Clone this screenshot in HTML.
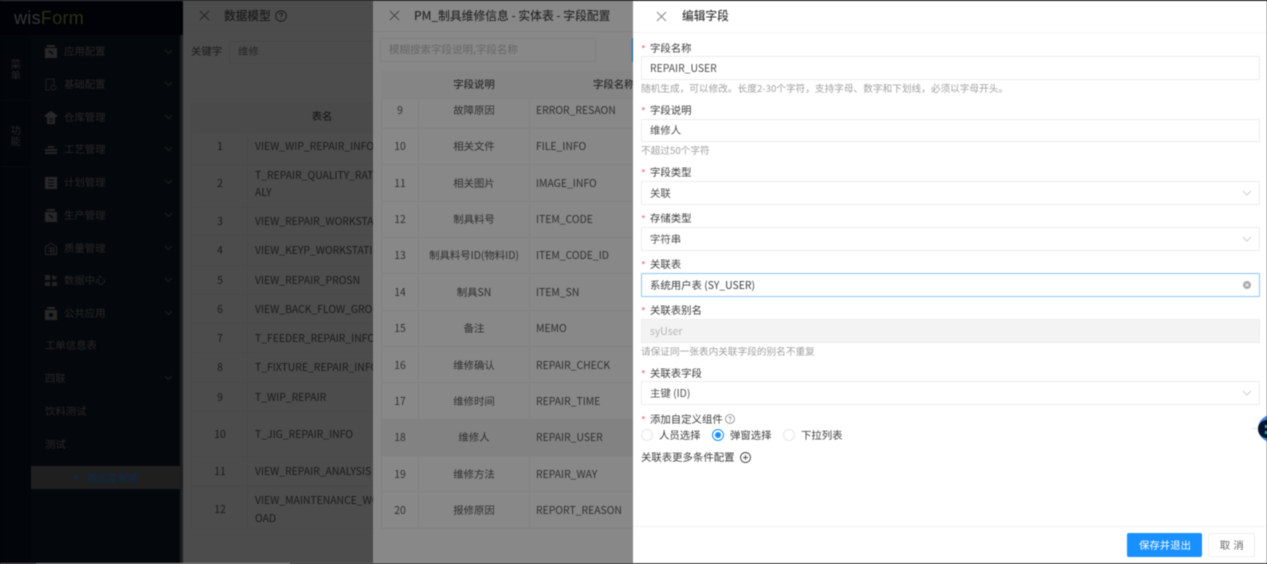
<!DOCTYPE html>
<html lang="zh"><head><meta charset="utf-8"><title>编辑字段</title>
<style>
html,body{margin:0;padding:0;width:1267px;height:564px;overflow:hidden;background:#000}
#r{position:absolute;left:0;top:0;width:1267px;height:564px;overflow:hidden;font-family:"Noto Sans CJK SC","Liberation Sans",sans-serif;font-size:10.4px;filter:blur(.45px)}
#r div,#r svg{position:absolute}
.t{white-space:nowrap;line-height:14px;height:14px;transform:translateY(-7px)}
.c{transform:translate(-50%,-7px)}
.m{left:64px;color:#262626;font-size:10.4px}
.g{left:164px;width:9px;height:9px}
.p1{color:#1a1a1a}
.p2{color:#303030}
.l{background:#494949}
.k{background:#828282}
.lb{left:650px;color:#3e3e3e;font-size:10.4px}
.st{left:641px;color:#f5656b;font-size:10px}
.hn{left:641px;color:#a0a0a0;font-size:9.67px}
.in{left:641px;width:617px;box-sizing:content-box;border:1px solid #ececec;border-radius:1px;background:#fff}
.v{left:650px;color:#4e4e4e;font-size:10.4px}
.ar{left:1242px;width:10px;height:10px}
</style></head><body>
<div id="r">
<!-- sidebar -->
<div style="left:0;top:0;width:31px;height:564px;background:#02050a"></div>
<div style="left:31px;top:0;width:150px;height:564px;background:#04080c"></div>
<div style="left:0;top:0;width:183px;height:35px;background:#000208"></div>
<div style="left:0;top:100px;width:31px;height:1px;background:#070a0e"></div>
<div style="left:0;top:166px;width:31px;height:1px;background:#070a0e"></div>
<div style="left:180px;top:35px;width:3px;height:529px;background:#1d1e1f"></div>
<div class="t" style="left:14px;top:18px;font-size:18px;line-height:20px;height:20px;transform:translateY(-10px);font-family:'Liberation Sans',sans-serif;letter-spacing:.3px"><span style="color:#363636">wis</span><span style="color:#2b3010">Form</span></div>
<div class="t c" style="left:16px;top:63px;color:#262626;line-height:11px;height:22px;width:11px;transform:translate(-50%,-5px);white-space:normal">菜单</div>
<div class="t c" style="left:16px;top:129px;color:#262626;line-height:11px;height:22px;width:11px;transform:translate(-50%,-5px);white-space:normal">功能</div>

<div class="t m" style="top:51px">应用配置</div>
<div class="t m" style="top:84px">基础配置</div>
<div class="t m" style="top:117px">仓库管理</div>
<div class="t m" style="top:149px">工艺管理</div>
<div class="t m" style="top:182px">计划管理</div>
<div class="t m" style="top:215px">生产管理</div>
<div class="t m" style="top:248px">质量管理</div>
<div class="t m" style="top:280px">数据中心</div>
<div class="t m" style="top:313px">公共应用</div>
<div class="t m" style="top:345px;left:45px">工单信息表</div>
<div class="t m" style="top:378px;left:45px">四联</div>
<div class="t m" style="top:411px;left:45px">饮料测试</div>
<div class="t m" style="top:444px;left:45px">测试</div>

<svg style="left:45px;top:45px" width="12" height="13" viewBox="0 0 12 13"><path d="M2 0h8v2H2zM0 3h12v10H0z" fill="#272727"/><path d="M4 6l4 3" stroke="#04080c" stroke-width="1.500"/></svg>
<svg style="left:45px;top:78px" width="12" height="13" viewBox="0 0 12 13" fill="none" stroke="#1f1f1f"><path d="M1 1h8v5M1 1v11h4"/><circle cx="8.500" cy="9.500" r="2.500"/></svg>
<svg style="left:45px;top:111px" width="12" height="13" viewBox="0 0 12 13"><path d="M6 0l6 4v2H0V4zM2 6h8v7H2z" fill="#272727"/><path d="M4 8h4M4 10.500h4" stroke="#04080c"/></svg>
<svg style="left:45px;top:144px" width="12" height="11" viewBox="0 0 12 11"><path d="M3 2h6v2H3zM0 5h12v2H0zM0 8h12v2H0z" fill="#242424"/></svg>
<svg style="left:45px;top:176px" width="12" height="13" viewBox="0 0 12 13"><path d="M0 1h12v12H0z" fill="#272727"/><path d="M3 4h6M3 7h6M3 10h6" stroke="#04080c"/></svg>
<svg style="left:45px;top:209px" width="12" height="13" viewBox="0 0 12 13"><path d="M2 0h8v2H2zM0 3h12v10H0z" fill="#272727"/><path d="M4 6l4 3" stroke="#04080c" stroke-width="1.500"/></svg>
<svg style="left:45px;top:242px" width="12" height="13" viewBox="0 0 12 13" fill="none" stroke="#232323"><path d="M.5 12.500V5L6 1l5.500 4v7.500zM3 6h6v6.500M6 6v6.500M3 9h6"/></svg>
<svg style="left:45px;top:274px" width="12" height="13" viewBox="0 0 12 13"><path d="M0 1h5v5H0zM7 1l5 2-2 3-3-1zM0 8h5v4H0zM7 8h5v4H7z" fill="#222"/></svg>
<svg style="left:45px;top:307px" width="12" height="13" viewBox="0 0 12 13"><path d="M2 0h8v2H2zM0 3h12v10H0z" fill="#272727"/><circle cx="6" cy="8" r="2" fill="#04080c"/></svg>

<svg class="g" style="top:47px" viewBox="0 0 9 9" fill="none" stroke="#1e1e1e"><path d="M1 3l3.500 3.500L8 3"/></svg>
<svg class="g" style="top:79px" viewBox="0 0 9 9" fill="none" stroke="#1e1e1e"><path d="M1 3l3.500 3.500L8 3"/></svg>
<svg class="g" style="top:112px" viewBox="0 0 9 9" fill="none" stroke="#1e1e1e"><path d="M1 3l3.500 3.500L8 3"/></svg>
<svg class="g" style="top:144px" viewBox="0 0 9 9" fill="none" stroke="#1e1e1e"><path d="M1 3l3.500 3.500L8 3"/></svg>
<svg class="g" style="top:177px" viewBox="0 0 9 9" fill="none" stroke="#1e1e1e"><path d="M1 3l3.500 3.500L8 3"/></svg>
<svg class="g" style="top:210px" viewBox="0 0 9 9" fill="none" stroke="#1e1e1e"><path d="M1 3l3.500 3.500L8 3"/></svg>
<svg class="g" style="top:243px" viewBox="0 0 9 9" fill="none" stroke="#1e1e1e"><path d="M1 3l3.500 3.500L8 3"/></svg>
<svg class="g" style="top:275px" viewBox="0 0 9 9" fill="none" stroke="#1e1e1e"><path d="M1 3l3.500 3.500L8 3"/></svg>
<svg class="g" style="top:308px" viewBox="0 0 9 9" fill="none" stroke="#1e1e1e"><path d="M1 3l3.500 3.500L8 3"/></svg>
<svg class="g" style="top:373px" viewBox="0 0 9 9" fill="none" stroke="#1e1e1e"><path d="M1 3l3.500 3.500L8 3"/></svg>

<div style="left:31px;top:466px;width:149px;height:23px;background:#1f1f1f"></div>
<div class="t" style="left:72px;top:477px;color:#0c2a4c"><span style="font-size:13px;margin-right:7px">+</span>添加菜单项</div>

<!-- panel 1 -->
<div style="left:183px;top:0;width:190px;height:564px;background:#4c4c4c"></div>
<svg style="left:199px;top:10px" width="11" height="11" viewBox="0 0 11 11" stroke="#242424" fill="none"><path d="M1 1l9 9M10 1l-9 9"/></svg>
<div class="t p1" style="left:224px;top:16px;font-size:11.700px;font-weight:500">数据模型</div>
<svg style="left:275px;top:10px" width="12" height="12" viewBox="0 0 12 12" fill="none" stroke="#1c1c1c"><circle cx="6" cy="6" r="5.300"/><path d="M4.500 4.500c0-2 3-2 3 0 0 1-1.500 1-1.500 2.500M6 8.500v1"/></svg>
<div class="l" style="left:183px;top:31px;width:190px;height:1px"></div>
<div class="t p1" style="left:191px;top:51px">关键字</div>
<div style="left:229px;top:41px;width:150px;height:21px;border:1px solid #474747;border-radius:2px"></div>
<div class="t" style="left:238px;top:51px;color:#262626">维修</div>
<div style="left:191px;top:102px;width:182px;height:30px;background:#4a4a4a"></div>
<div class="t c p1" style="left:322px;top:116px;font-weight:500">表名</div>
<div class="l" style="left:191px;top:132px;width:182px;height:1px"></div>
<div class="l" style="left:191px;top:164px;width:182px;height:1px"></div>
<div class="l" style="left:191px;top:207px;width:182px;height:1px"></div>
<div class="l" style="left:191px;top:235px;width:182px;height:1px"></div>
<div class="l" style="left:191px;top:265px;width:182px;height:1px"></div>
<div class="l" style="left:191px;top:294px;width:182px;height:1px"></div>
<div class="l" style="left:191px;top:323px;width:182px;height:1px"></div>
<div class="l" style="left:191px;top:352px;width:182px;height:1px"></div>
<div class="l" style="left:191px;top:382px;width:182px;height:1px"></div>
<div class="l" style="left:191px;top:411px;width:182px;height:1px"></div>
<div class="l" style="left:191px;top:456px;width:182px;height:1px"></div>
<div class="l" style="left:191px;top:485px;width:182px;height:1px"></div>
<div class="l" style="left:191px;top:528px;width:182px;height:1px"></div>
<div class="l" style="left:247px;top:132px;width:1px;height:396px"></div>
<div class="l" style="left:191px;top:132px;width:1px;height:396px"></div>
<div class="t c p1" style="left:220px;top:146px">1</div><div class="t p1" style="left:255px;top:146px;width:118px;overflow:hidden">VIEW_WIP_REPAIR_INFO</div>
<div class="t c p1" style="left:220px;top:183px">2</div><div class="t p1" style="left:255px;top:175px;width:118px;overflow:hidden">T_REPAIR_QUALITY_RATE</div><div class="t p1" style="left:255px;top:192px">ALY</div>
<div class="t c p1" style="left:220px;top:221px">3</div><div class="t p1" style="left:255px;top:221px;width:118px;overflow:hidden">VIEW_REPAIR_WORKSTATION</div>
<div class="t c p1" style="left:220px;top:250px">4</div><div class="t p1" style="left:255px;top:250px;width:118px;overflow:hidden">VIEW_KEYP_WORKSTATION</div>
<div class="t c p1" style="left:220px;top:280px">5</div><div class="t p1" style="left:255px;top:280px">VIEW_REPAIR_PROSN</div>
<div class="t c p1" style="left:220px;top:309px">6</div><div class="t p1" style="left:255px;top:309px;width:118px;overflow:hidden">VIEW_BACK_FLOW_GROUP</div>
<div class="t c p1" style="left:220px;top:338px">7</div><div class="t p1" style="left:255px;top:338px;width:118px;overflow:hidden">T_FEEDER_REPAIR_INFO</div>
<div class="t c p1" style="left:220px;top:367px">8</div><div class="t p1" style="left:255px;top:367px;width:118px;overflow:hidden">T_FIXTURE_REPAIR_INFO</div>
<div class="t c p1" style="left:220px;top:397px">9</div><div class="t p1" style="left:255px;top:397px">T_WIP_REPAIR</div>
<div class="t c p1" style="left:220px;top:434px">10</div><div class="t p1" style="left:255px;top:434px">T_JIG_REPAIR_INFO</div>
<div class="t c p1" style="left:220px;top:471px">11</div><div class="t p1" style="left:255px;top:471px;width:118px;overflow:hidden">VIEW_REPAIR_ANALYSIS</div>
<div class="t c p1" style="left:220px;top:509px">12</div><div class="t p1" style="left:255px;top:500px;width:118px;overflow:hidden">VIEW_MAINTENANCE_WORKL</div><div class="t p1" style="left:255px;top:518px">OAD</div>

<!-- panel 2 -->
<div style="left:373px;top:0;width:260px;height:564px;background:#888"></div>
<svg style="left:389px;top:10px" width="11" height="11" viewBox="0 0 11 11" stroke="#484848" fill="none"><path d="M1 1l9 9M10 1l-9 9"/></svg>
<div class="t p2" style="left:414px;top:16px;font-size:11.800px;font-weight:500;color:#2a2a2a">PM_制具维修信息 - 实体表 - 字段配置</div>
<div class="k" style="left:373px;top:31px;width:260px;height:1px"></div>
<div style="left:380px;top:38px;width:214px;height:22px;border:1px solid #7f7f7f;border-radius:2px"></div>
<div class="t" style="left:389px;top:50px;color:#666;font-size:10.500px">模糊搜索字段说明,字段名称</div>
<div style="left:632px;top:38px;width:1px;height:24px;background:#0f5b9a"></div>
<div style="left:381px;top:70px;width:252px;height:28px;background:#858585"></div>
<div class="t c" style="left:474px;top:84px;color:#2c2c2c;font-weight:500">字段说明</div>
<div class="t" style="left:593px;top:84px;color:#2c2c2c;font-weight:500">字段名称</div>
<div style="left:381px;top:419px;width:252px;height:37px;background:#828282"></div>
<div class="k" style="left:381px;top:98px;width:252px;height:1px"></div>
<div class="k" style="left:381px;top:128px;width:252px;height:1px"></div>
<div class="k" style="left:381px;top:164px;width:252px;height:1px"></div>
<div class="k" style="left:381px;top:201px;width:252px;height:1px"></div>
<div class="k" style="left:381px;top:237px;width:252px;height:1px"></div>
<div class="k" style="left:381px;top:273px;width:252px;height:1px"></div>
<div class="k" style="left:381px;top:310px;width:252px;height:1px"></div>
<div class="k" style="left:381px;top:346px;width:252px;height:1px"></div>
<div class="k" style="left:381px;top:382px;width:252px;height:1px"></div>
<div class="k" style="left:381px;top:419px;width:252px;height:1px"></div>
<div class="k" style="left:381px;top:455px;width:252px;height:1px"></div>
<div class="k" style="left:381px;top:491px;width:252px;height:1px"></div>
<div class="k" style="left:381px;top:528px;width:252px;height:1px"></div>
<div class="k" style="left:381px;top:98px;width:1px;height:430px"></div>
<div class="k" style="left:418px;top:98px;width:1px;height:430px"></div>
<div class="k" style="left:529px;top:98px;width:1px;height:430px"></div>

<div class="t c p2" style="left:400px;top:110px">9</div><div class="t c p2" style="left:474px;top:110px">故障原因</div><div class="t p2" style="left:536px;top:110px">ERROR_RESAON</div>
<div class="t c p2" style="left:400px;top:146px">10</div><div class="t c p2" style="left:474px;top:146px">相关文件</div><div class="t p2" style="left:536px;top:146px">FILE_INFO</div>
<div class="t c p2" style="left:400px;top:183px">11</div><div class="t c p2" style="left:474px;top:183px">相关图片</div><div class="t p2" style="left:536px;top:183px">IMAGE_INFO</div>
<div class="t c p2" style="left:400px;top:219px">12</div><div class="t c p2" style="left:474px;top:219px">制具料号</div><div class="t p2" style="left:536px;top:219px">ITEM_CODE</div>
<div class="t c p2" style="left:400px;top:255px">13</div><div class="t c p2" style="left:474px;top:255px">制具料号ID(物料ID)</div><div class="t p2" style="left:536px;top:255px">ITEM_CODE_ID</div>
<div class="t c p2" style="left:400px;top:292px">14</div><div class="t c p2" style="left:474px;top:292px">制具SN</div><div class="t p2" style="left:536px;top:292px">ITEM_SN</div>
<div class="t c p2" style="left:400px;top:328px">15</div><div class="t c p2" style="left:474px;top:328px">备注</div><div class="t p2" style="left:536px;top:328px">MEMO</div>
<div class="t c p2" style="left:400px;top:365px">16</div><div class="t c p2" style="left:474px;top:365px">维修确认</div><div class="t p2" style="left:536px;top:365px">REPAIR_CHECK</div>
<div class="t c p2" style="left:400px;top:401px">17</div><div class="t c p2" style="left:474px;top:401px">维修时间</div><div class="t p2" style="left:536px;top:401px">REPAIR_TIME</div>
<div class="t c p2" style="left:400px;top:437px">18</div><div class="t c p2" style="left:474px;top:437px">维修人</div><div class="t p2" style="left:536px;top:437px">REPAIR_USER</div>
<div class="t c p2" style="left:400px;top:474px">19</div><div class="t c p2" style="left:474px;top:474px">维修方法</div><div class="t p2" style="left:536px;top:474px">REPAIR_WAY</div>
<div class="t c p2" style="left:400px;top:510px">20</div><div class="t c p2" style="left:474px;top:510px">报修原因</div><div class="t p2" style="left:536px;top:510px">REPORT_REASON</div>

<!-- panel 3 -->
<div style="left:633px;top:0;width:634px;height:564px;background:#fff"></div>
<div style="left:0;top:0;width:1267px;height:1px;background:#3a3a3a"></div>
<svg style="left:656px;top:11px" width="11" height="11" viewBox="0 0 11 11" stroke="#8a8a8a" fill="none"><path d="M1 1l9 9M10 1l-9 9"/></svg>
<div class="t" style="left:682px;top:16px;font-size:11.700px;font-weight:500;color:#3a3a3a">编辑字段</div>
<div style="left:633px;top:32px;width:634px;height:1px;background:#f3f3f3"></div>

<div class="t st" style="top:49px">*</div><div class="t lb" style="top:48px">字段名称</div>
<div class="in" style="top:56px;height:22px"></div><div class="t v" style="top:68px">REPAIR_USER</div>
<div class="t hn" style="top:88px">随机生成，可以修改。长度2-30个字符，支持字母、数字和下划线，必须以字母开头。</div>

<div class="t st" style="top:111px">*</div><div class="t lb" style="top:110px">字段说明</div>
<div class="in" style="top:119px;height:21px"></div><div class="t v" style="top:130px">维修人</div>
<div class="t hn" style="top:150px">不超过50个字符</div>

<div class="t st" style="top:173px">*</div><div class="t lb" style="top:172px">字段类型</div>
<div class="in" style="top:181px;height:22px"></div><div class="t v" style="top:193px">关联</div>
<svg class="ar" style="top:188px" viewBox="0 0 10 10" fill="none" stroke="#cfcfcf"><path d="M1 3l4 4 4-4"/></svg>

<div class="t st" style="top:219px">*</div><div class="t lb" style="top:218px">存储类型</div>
<div class="in" style="top:227px;height:22px"></div><div class="t v" style="top:239px">字符串</div>
<svg class="ar" style="top:234px" viewBox="0 0 10 10" fill="none" stroke="#cfcfcf"><path d="M1 3l4 4 4-4"/></svg>

<div class="t st" style="top:265px">*</div><div class="t lb" style="top:264px">关联表</div>
<div class="in" style="top:273px;height:22px;border-color:#8cc6f7"></div><div class="t v" style="top:285px;color:#3e3e3e">系统用户表 (SY_USER)</div>
<svg style="left:1243px;top:281px" width="8" height="8" viewBox="0 0 8 8"><circle cx="4" cy="4" r="4" fill="#aaa"/><path d="M2.500 2.500l3 3M5.500 2.500l-3 3" stroke="#fff" stroke-width=".8"/></svg>

<div class="t st" style="top:311px">*</div><div class="t lb" style="top:310px">关联表别名</div>
<div class="in" style="top:319px;height:22px;background:#f3f3f3"></div><div class="t v" style="top:331px;color:#b5b5b5">syUser</div>
<div class="t hn" style="top:351px">请保证同一张表内关联字段的别名不重复</div>

<div class="t st" style="top:374px">*</div><div class="t lb" style="top:373px">关联表字段</div>
<div class="in" style="top:381px;height:22px"></div><div class="t v" style="top:393px">主键 (ID)</div>
<svg class="ar" style="top:388px" viewBox="0 0 10 10" fill="none" stroke="#cfcfcf"><path d="M1 3l4 4 4-4"/></svg>

<div class="t st" style="top:420px">*</div><div class="t lb" style="top:419px">添加自定义组件</div>
<svg style="left:725px;top:414px" width="10" height="10" viewBox="0 0 10 10" fill="none" stroke="#888" stroke-width=".8"><circle cx="5" cy="5" r="4.500"/><path d="M3.800 4c0-1.500 2.400-1.500 2.400 0 0 .8-1.200.8-1.200 2M5 7v1"/></svg>

<div style="left:641px;top:429px;width:10px;height:10px;border:1px solid #e6e6e6;border-radius:50%"></div>
<div class="t" style="left:659px;top:435px;color:#3e3e3e">人员选择</div>
<div style="left:712px;top:429px;width:10px;height:10px;border:1px solid #1890ff;border-radius:50%"></div>
<div style="left:715px;top:432px;width:6px;height:6px;background:#1890ff;border-radius:50%"></div>
<div class="t" style="left:730px;top:435px;color:#3e3e3e">弹窗选择</div>
<div style="left:783px;top:429px;width:10px;height:10px;border:1px solid #e6e6e6;border-radius:50%"></div>
<div class="t" style="left:801px;top:435px;color:#3e3e3e">下拉列表</div>

<div class="t" style="left:641px;top:457px;color:#3e3e3e">关联表更多条件配置</div>
<svg style="left:740px;top:452px" width="11" height="11" viewBox="0 0 11 11" fill="none" stroke="#444" stroke-width=".9"><circle cx="5.500" cy="5.500" r="5"/><path d="M5.500 3v5M3 5.500h5"/></svg>

<div style="left:633px;top:526px;width:634px;height:1px;background:#f3f3f3"></div>
<div style="left:1127px;top:533px;width:75px;height:24px;background:#1890ff;border-radius:2px"></div>
<div class="t c" style="left:1165px;top:545px;color:#fff">保存并退出</div>
<div style="left:1208px;top:533px;width:45px;height:22px;border:1px solid #eee;border-radius:2px;background:#fff"></div>
<div class="t c" style="left:1232px;top:545px;color:#666;letter-spacing:.5px">取 消</div>

<div style="left:1258px;top:415px;width:27px;height:27px;border-radius:50%;background:#3f86ee"></div>
<div style="left:1258px;top:420px;width:18px;height:18px;border-radius:50%;background:#06152c"></div>
<div style="left:1265px;top:425px;width:2px;height:3px;background:#1bc7d6"></div>
<div style="left:1265px;top:431px;width:2px;height:3px;background:#1bc7d6"></div>
<div style="left:1252px;top:428px;width:6px;height:1px;background:#d7e6fb"></div>

<div style="left:0;top:563px;width:1267px;height:1px;background:#6a6a6a"></div>
<div style="left:36px;top:563px;width:254px;height:1px;background:#a8a8a8"></div>
</div>
</body></html>
